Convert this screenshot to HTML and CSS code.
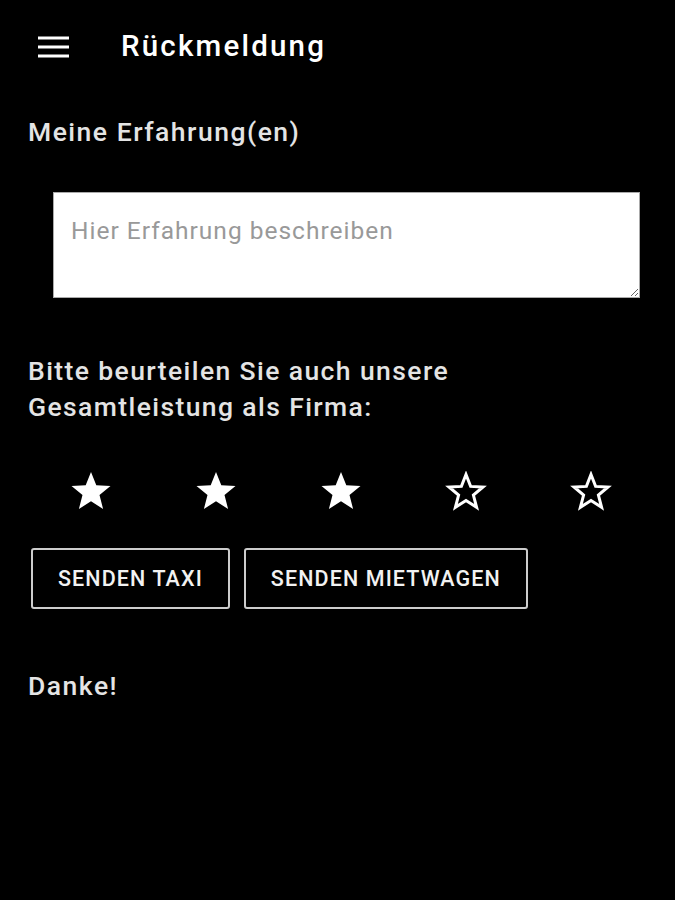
FILE: index.html
```html
<!DOCTYPE html>
<html lang="de">
<head>
    <meta charset="UTF-8">
    <meta name="viewport" content="width=device-width, initial-scale=1.0">
    <title>Rückmeldung</title>
    <link rel="stylesheet" href="styles.css">
</head>
<body>
    <header class="topbar">
        <button class="menu-btn" aria-label="Menü">
            <svg width="31" height="24" viewBox="0 0 31 24">
                <rect x="0" y="2.5" width="31" height="3" fill="#fff"/>
                <rect x="0" y="11.5" width="31" height="3" fill="#fff"/>
                <rect x="0" y="20.5" width="31" height="3" fill="#fff"/>
            </svg>
        </button>
        <h1 class="title">Rückmeldung</h1>
    </header>

    <main class="content">
        <h2 class="label">Meine Erfahrung(en)</h2>
        <textarea class="experience" placeholder="Hier Erfahrung beschreiben"></textarea>

        <p class="question">Bitte beurteilen Sie auch unsere Gesamtleistung als Firma:</p>

        <div class="stars">
            <span class="star">
                <svg width="42" height="40" viewBox="0 0 42 40"><polygon class="full" points="21,1 26.3,14.3 40.5,14.9 29.5,24.1 33.1,38 21,30.2 8.9,38 12.5,24.1 1.5,14.9 15.7,14.3"/></svg>
            </span>
            <span class="star">
                <svg width="42" height="40" viewBox="0 0 42 40"><polygon class="full" points="21,1 26.3,14.3 40.5,14.9 29.5,24.1 33.1,38 21,30.2 8.9,38 12.5,24.1 1.5,14.9 15.7,14.3"/></svg>
            </span>
            <span class="star">
                <svg width="42" height="40" viewBox="0 0 42 40"><polygon class="full" points="21,1 26.3,14.3 40.5,14.9 29.5,24.1 33.1,38 21,30.2 8.9,38 12.5,24.1 1.5,14.9 15.7,14.3"/></svg>
            </span>
            <span class="star">
                <svg width="42" height="40" viewBox="0 0 42 40"><polygon class="empty" points="21,3.5 25.6,15.4 38,16 28.4,24.1 31.6,36.3 21,29.5 10.4,36.3 13.6,24.1 4,16 16.4,15.4"/></svg>
            </span>
            <span class="star">
                <svg width="42" height="40" viewBox="0 0 42 40"><polygon class="empty" points="21,3.5 25.6,15.4 38,16 28.4,24.1 31.6,36.3 21,29.5 10.4,36.3 13.6,24.1 4,16 16.4,15.4"/></svg>
            </span>
        </div>

        <div class="actions">
            <button class="send-btn">Senden Taxi</button>
            <button class="send-btn">Senden Mietwagen</button>
        </div>

        <p class="thanks">Danke!</p>
    </main>
</body>
</html>
```

FILE: styles.css
```css
body {
    margin: 0;
    background-color: #000;
    color: #e4e4e4;
    font-family: Roboto, "Noto Sans", Arial, sans-serif;
}

.topbar {
    display: flex;
    align-items: center;
    height: 92px;
    padding: 0 38px;
}

.menu-btn {
    display: flex;
    padding: 0;
    background: none;
    border: none;
    cursor: pointer;
}

.title {
    margin: 0 0 0 52px;
    font-size: 29.5px;
    font-weight: 500;
    letter-spacing: 2.2px;
    color: #fff;
}

.content {
    padding: 0 28px;
}

.label {
    margin: 24px 0 0;
    font-size: 26.5px;
    font-weight: 500;
    letter-spacing: 1.5px;
    line-height: 32px;
}

.experience {
    display: block;
    box-sizing: border-box;
    width: 587px;
    height: 106px;
    margin: 44px 0 0 25px;
    padding: 24px 17px 17px;
    border: 1px solid #aaa;
    background: #fff;
    font-family: inherit;
    font-size: 24.5px;
    letter-spacing: 1px;
    line-height: 28px;
    color: #333;
}

.experience::placeholder {
    color: #999;
}

.question {
    margin: 55px 0 0;
    font-size: 26.5px;
    font-weight: 500;
    letter-spacing: 1.4px;
    line-height: 36px;
}

.stars {
    display: flex;
    width: 625px;
    margin-top: 46px;
}

.star {
    flex: 1;
    display: flex;
    justify-content: center;
}

.star .full {
    fill: #fff;
}

.star .empty {
    fill: none;
    stroke: #fff;
    stroke-width: 3;
    stroke-linejoin: miter;
}

.actions {
    display: flex;
    gap: 14px;
    margin: 37px 0 0 3px;
}

.send-btn {
    height: 61px;
    padding: 0 25px;
    background: #000;
    border: 2px solid #ccc;
    border-radius: 3px;
    color: #f2f2f2;
    font-family: inherit;
    font-size: 21.5px;
    font-weight: 500;
    letter-spacing: 1.1px;
    text-transform: uppercase;
    cursor: pointer;
}

.thanks {
    margin: 59px 0 0;
    font-size: 26.5px;
    font-weight: 500;
    letter-spacing: 1.5px;
    line-height: 36px;
}
```
